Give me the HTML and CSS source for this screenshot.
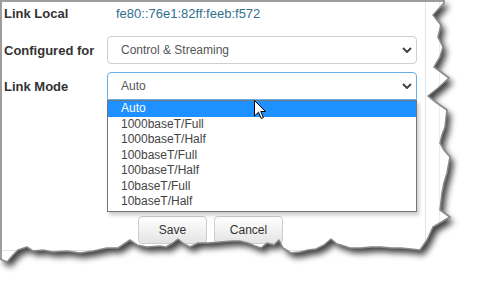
FILE: index.html
```html
<!DOCTYPE html>
<html lang="en">
<head>
  <meta charset="UTF-8" />
  <meta name="viewport" content="width=device-width, initial-scale=1.0"/>
  <title>Network Settings</title>
  <link rel="stylesheet" href="styles.css">
</head>
<body>

  <div class="shot">
    <div class="panel">
      <div class="row row-static">
        <span class="label">Link Local</span>
        <span class="value">fe80::76e1:82ff:feeb:f572</span>
      </div>

      <div class="row">
        <span class="label">Configured for</span>
        <div class="select">
          <span>Control &amp; Streaming</span>
          <svg class="chevron" width="10" height="6" viewBox="0 0 10 6"><polyline points="1,1 5,5 9,1" /></svg>
        </div>
      </div>

      <div class="row">
        <span class="label">Link Mode</span>
        <div class="select focused">
          <span>Auto</span>
          <svg class="chevron" width="10" height="6" viewBox="0 0 10 6"><polyline points="1,1 5,5 9,1" /></svg>
          <ul class="options">
            <li class="selected">Auto</li>
            <li>1000baseT/Full</li>
            <li>1000baseT/Half</li>
            <li>100baseT/Full</li>
            <li>100baseT/Half</li>
            <li>10baseT/Full</li>
            <li>10baseT/Half</li>
          </ul>
        </div>
      </div>

      <div class="buttons">
        <button>Save</button>
        <button>Cancel</button>
      </div>
    </div>
    <div class="gutter"></div>
  </div>

  <!-- mouse pointer over the open list -->
  <svg class="cursor" width="13" height="20" viewBox="0 0 13 20">
    <polygon points="0.5,0.5 0.5,16 4.5,12.2 7.2,18.5 9.4,17.6 6.8,11.5 11.5,11.5" />
  </svg>

  <!-- torn paper edge of the screenshot -->
  <svg class="torn" width="482" height="290" viewBox="0 0 482 290">
    <defs>
      <filter id="soft" x="-20%" y="-20%" width="140%" height="140%">
        <feGaussianBlur stdDeviation="3.2" />
      </filter>
      <clipPath id="outside">
        <polygon points="444,0 482,0 482,290 0,290 0,259 7,262 13,255 18,250 27,247 33,251 43,250 53,252 67,251 80,253 93,251 107,248 118,248 124,244 130,240 137,245 147,247 160,246 166,247 173,243 178,239 184,244 190,247 198,243 208,243 220,242 232,241 240,241 248,243 255,246 261,248 267,243 274,245 279,240 283,248 291,253 300,252 308,250 316,249 324,245 331,239 337,244 341,245 350,248 361,248 371,247 381,247 391,248 401,248 411,249 420,250 427,240 433,227 450,217 440,210 442,193 444,183 447,173 450,157 444,150 440,143 442,135 445,127 446,118 447,110 437,103 428,96 438,88 449,78 441,72 434,67 440,57 443,47 438,37 441,25 437,20 433,15 444,3" />
      </clipPath>
    </defs>
    <polygon class="paper" points="444,0 482,0 482,290 0,290 0,259 7,262 13,255 18,250 27,247 33,251 43,250 53,252 67,251 80,253 93,251 107,248 118,248 124,244 130,240 137,245 147,247 160,246 166,247 173,243 178,239 184,244 190,247 198,243 208,243 220,242 232,241 240,241 248,243 255,246 261,248 267,243 274,245 279,240 283,248 291,253 300,252 308,250 316,249 324,245 331,239 337,244 341,245 350,248 361,248 371,247 381,247 391,248 401,248 411,249 420,250 427,240 433,227 450,217 440,210 442,193 444,183 447,173 450,157 444,150 440,143 442,135 445,127 446,118 447,110 437,103 428,96 438,88 449,78 441,72 434,67 440,57 443,47 438,37 441,25 437,20 433,15 444,3" />
    <g clip-path="url(#outside)">
      <polygon class="shade" filter="url(#soft)" transform="translate(4 5)" points="0,0 444,0 444,3 433,15 437,20 441,25 438,37 443,47 440,57 434,67 441,72 449,78 438,88 428,96 437,103 447,110 446,118 445,127 442,135 440,143 444,150 450,157 447,173 444,183 442,193 440,210 450,217 433,227 427,240 420,250 411,249 401,248 391,248 381,247 371,247 361,248 350,248 341,245 337,244 331,239 324,245 316,249 308,250 300,252 291,253 283,248 279,240 274,245 267,243 261,248 255,246 248,243 240,241 232,241 220,242 208,243 198,243 190,247 184,244 178,239 173,243 166,247 160,246 147,247 137,245 130,240 124,244 118,248 107,248 93,251 80,253 67,251 53,252 43,250 33,251 27,247 18,250 13,255 7,262 0,259" />
    </g>
    <polyline class="edge" points="444,0 444,3 433,15 437,20 441,25 438,37 443,47 440,57 434,67 441,72 449,78 438,88 428,96 437,103 447,110 446,118 445,127 442,135 440,143 444,150 450,157 447,173 444,183 442,193 440,210 450,217 433,227 427,240 420,250 411,249 401,248 391,248 381,247 371,247 361,248 350,248 341,245 337,244 331,239 324,245 316,249 308,250 300,252 291,253 283,248 279,240 274,245 267,243 261,248 255,246 248,243 240,241 232,241 220,242 208,243 198,243 190,247 184,244 178,239 173,243 166,247 160,246 147,247 137,245 130,240 124,244 118,248 107,248 93,251 80,253 67,251 53,252 43,250 33,251 27,247 18,250 13,255 7,262 0,259" />
  </svg>

</body>
</html>
```

FILE: styles.css
```css
body {
  margin: 0;
  width: 482px;
  height: 290px;
  overflow: hidden;
  background: #fff;
  font-family: "Liberation Sans", Arial, sans-serif;
  color: #333;
  position: relative;
}

.shot {
  display: flex;
  height: 288px;
  border-left: 2px solid #9d9d9d;
  border-top: 2px solid #9d9d9d;
}

.panel {
  width: 421px;
  height: 248px;
  border-right: 1px solid #e4e4e4;
  border-bottom: 1px solid #e4e4e4;
  padding-left: 2px;
  box-sizing: content-box;
}

.gutter {
  width: 13px;
  border-right: 1px solid #ececec;
}

.row {
  display: grid;
  grid-template-columns: 103px 310px;
  align-items: center;
  height: 28px;
  margin-bottom: 8px;
}

.row-static {
  height: 23px;
  margin-bottom: 11px;
}

.label {
  font-size: 13px;
  font-weight: bold;
  color: #333;
}

.value {
  font-size: 13px;
  color: #31708f;
  padding-left: 9px;
}

.select {
  position: relative;
  height: 28px;
  box-sizing: border-box;
  border: 1px solid #cfcfcf;
  border-radius: 4px;
  display: flex;
  align-items: center;
  justify-content: space-between;
  padding: 0 4px 0 13px;
  font-size: 12px;
  color: #555;
  background: #fff;
}

.select.focused {
  border-color: #66afe9;
  border-radius: 4px 4px 0 0;
}

.chevron polyline {
  fill: none;
  stroke: #444;
  stroke-width: 2;
}

.options {
  position: absolute;
  left: -1px;
  top: 27px;
  width: 310px;
  box-sizing: border-box;
  margin: 0;
  padding: 0 0 1px;
  list-style: none;
  border: 1px solid #767676;
  background: #fff;
  box-shadow: 2px 3px 4px rgba(0, 0, 0, 0.22);
  z-index: 2;
}

.options li {
  height: 15.5px;
  line-height: 15.5px;
  padding-left: 13px;
  font-size: 12px;
  color: #444;
}

.options li.selected {
  background: #1e90ff;
  color: #fff;
}

.buttons {
  display: flex;
  gap: 7px;
  margin-top: 116px;
  padding-left: 134px;
}

button {
  width: 69px;
  height: 28px;
  border: 1px solid #cdcdcd;
  border-radius: 4px;
  background: linear-gradient(#ffffff, #e4e4e4);
  font-family: "Liberation Sans", Arial, sans-serif;
  font-size: 12px;
  color: #333;
}

.cursor {
  position: absolute;
  left: 254px;
  top: 100px;
  z-index: 3;
}

.cursor polygon {
  fill: #fff;
  stroke: #000;
  stroke-width: 1;
}

.torn {
  position: absolute;
  left: 0;
  top: 0;
  z-index: 4;
}

.paper {
  fill: #fff;
}

.shade {
  fill: rgba(0, 0, 0, 0.75);
}

.edge {
  fill: none;
  stroke: #8a8a8a;
  stroke-width: 1.6;
  stroke-linejoin: round;
}
```
